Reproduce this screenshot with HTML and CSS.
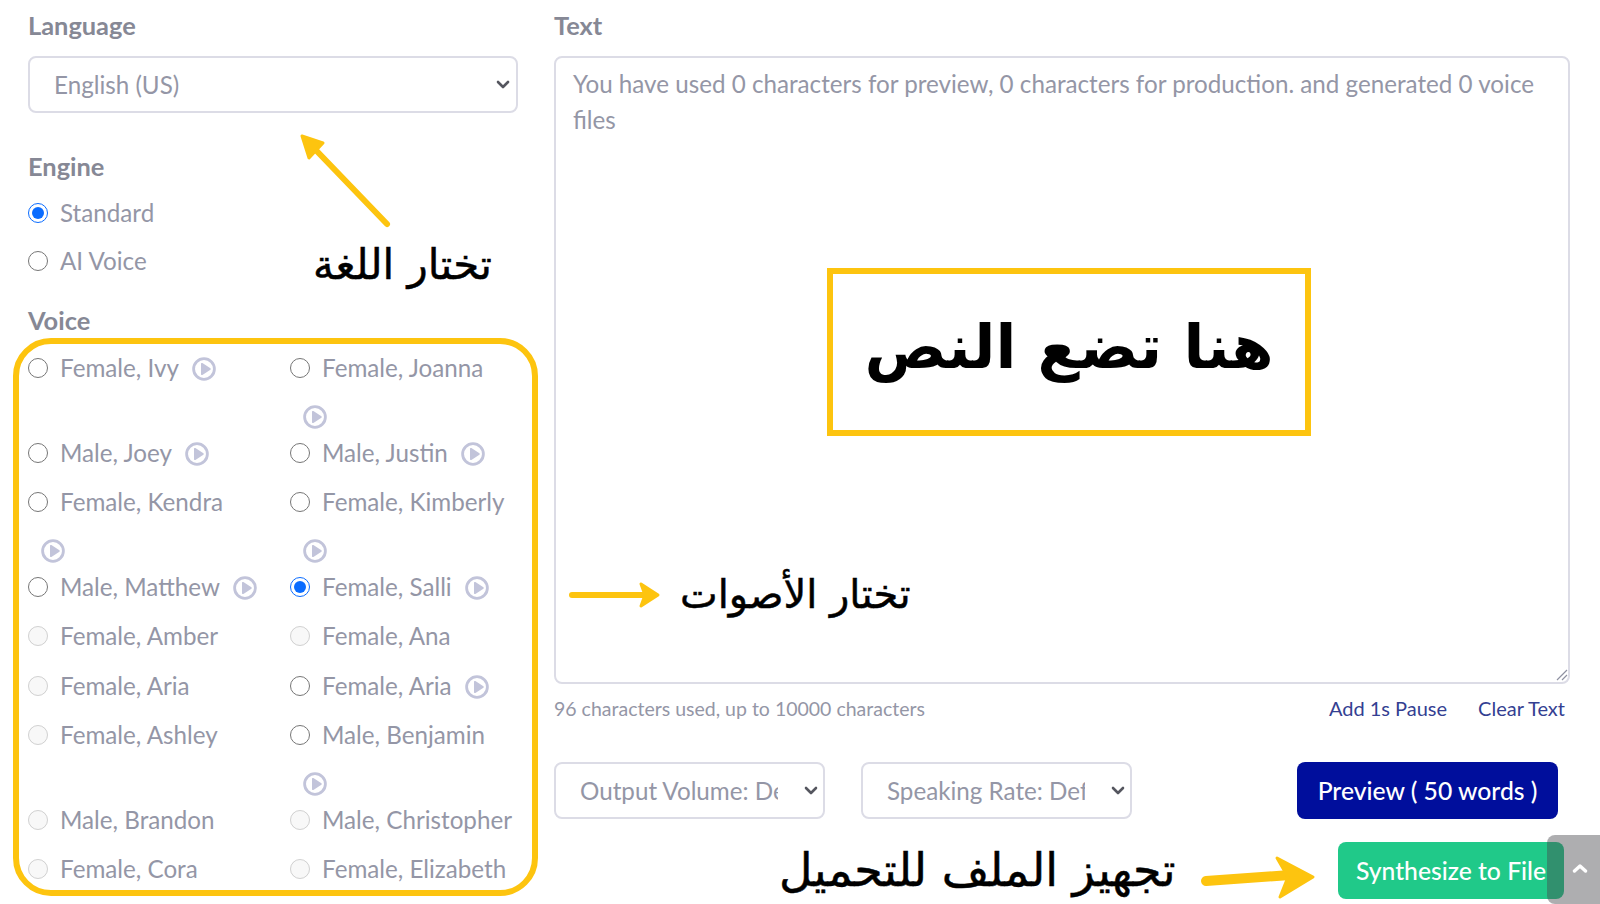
FILE: index.html
```html
<!DOCTYPE html>
<html lang="en">
<head>
    <meta charset="UTF-8">
    <meta name="viewport" content="width=device-width, initial-scale=1.0">
    <title>Text to Speech</title>
    <link rel="stylesheet" href="styles.css">
</head>
<body>
    <svg class="icon-defs" xmlns="http://www.w3.org/2000/svg">
        <symbol id="play" viewBox="0 0 24 24">
            <circle cx="12" cy="12" r="10.4" fill="none" stroke="currentColor" stroke-width="2.8"></circle>
            <path d="M9 6.8v10.4a.9.9 0 0 0 1.4.7l8-5.2a.9.9 0 0 0 0-1.4l-8-5.2a.9.9 0 0 0-1.4.7z" fill="currentColor"></path>
        </symbol>
    </svg>

    <div class="page">
        <div class="settings">
            <div class="form-group form-group-language">
                <label class="field-label" for="language">Language</label>
                <select id="language" class="select select-wide">
                    <option>English (US)</option>
                </select>
            </div>

            <div class="form-group form-group-engine">
                <div class="field-label">Engine</div>
                <label class="radio"><input type="radio" name="engine" checked>Standard</label>
                <label class="radio"><input type="radio" name="engine">AI Voice</label>
            </div>

            <div class="form-group">
                <div class="field-label">Voice</div>
                <div class="voices">
                    <label class="radio"><input type="radio" name="voice">Female, Ivy<svg class="play"><use href="#play"></use></svg></label>
                    <label class="radio"><input type="radio" name="voice">Female, Joanna<svg class="play play-below"><use href="#play"></use></svg></label>
                    <label class="radio"><input type="radio" name="voice">Male, Joey<svg class="play"><use href="#play"></use></svg></label>
                    <label class="radio"><input type="radio" name="voice">Male, Justin<svg class="play"><use href="#play"></use></svg></label>
                    <label class="radio"><input type="radio" name="voice">Female, Kendra<svg class="play play-below"><use href="#play"></use></svg></label>
                    <label class="radio"><input type="radio" name="voice">Female, Kimberly<svg class="play play-below"><use href="#play"></use></svg></label>
                    <label class="radio"><input type="radio" name="voice">Male, Matthew<svg class="play"><use href="#play"></use></svg></label>
                    <label class="radio"><input type="radio" name="voice" checked>Female, Salli<svg class="play"><use href="#play"></use></svg></label>
                    <label class="radio"><input type="radio" name="voice" disabled>Female, Amber</label>
                    <label class="radio"><input type="radio" name="voice" disabled>Female, Ana</label>
                    <label class="radio"><input type="radio" name="voice" disabled>Female, Aria</label>
                    <label class="radio"><input type="radio" name="voice">Female, Aria<svg class="play"><use href="#play"></use></svg></label>
                    <label class="radio"><input type="radio" name="voice" disabled>Female, Ashley</label>
                    <label class="radio"><input type="radio" name="voice">Male, Benjamin<svg class="play play-below"><use href="#play"></use></svg></label>
                    <label class="radio"><input type="radio" name="voice" disabled>Male, Brandon</label>
                    <label class="radio"><input type="radio" name="voice" disabled>Male, Christopher</label>
                    <label class="radio"><input type="radio" name="voice" disabled>Female, Cora</label>
                    <label class="radio"><input type="radio" name="voice" disabled>Female, Elizabeth</label>
                </div>
            </div>
        </div>

        <div class="editor">
            <label class="field-label" for="text">Text</label>
            <div class="text-wrap">
                <textarea id="text" class="text-input">You have used 0 characters for preview, 0 characters for production. and generated 0 voice files</textarea>
                <svg class="grip" xmlns="http://www.w3.org/2000/svg" viewBox="0 0 12 12" fill="none" stroke="#8f91a1" stroke-width="1.2">
                    <path d="M1 11L11 1M6 11l5-5"></path>
                </svg>
            </div>

            <div class="text-meta">
                <span>96 characters used, up to 10000 characters</span>
                <span class="text-actions">
                    <a href="#">Add 1s Pause</a>
                    <a href="#">Clear Text</a>
                </span>
            </div>

            <div class="controls">
                <select class="select select-small">
                    <option>Output Volume: Default</option>
                </select>
                <select class="select select-small">
                    <option>Speaking Rate: Default</option>
                </select>
                <button type="button" class="btn btn-preview">Preview ( 50 words )</button>
            </div>

            <div class="synth-row">
                <button type="button" class="btn btn-synth">Synthesize to File</button>
            </div>
        </div>

        <!-- Tutorial annotations drawn over the page -->
        <div class="note-voices"></div>
        <div class="note-text">
            <span lang="ar" dir="rtl">هنا تضع النص</span>
        </div>
        <span class="note note-lang" lang="ar" dir="rtl">تختار اللغة</span>
        <span class="note note-voice" lang="ar" dir="rtl">تختار الأصوات</span>
        <span class="note note-file" lang="ar" dir="rtl">تجهيز الملف للتحميل</span>

        <svg class="arrows" xmlns="http://www.w3.org/2000/svg" viewBox="0 0 1600 904">
            <path d="M387 224 L310 144" fill="none" stroke="#fdc40f" stroke-width="6" stroke-linecap="round"></path>
            <path d="M302 136 L323 143 L309 158 Z" fill="#fdc40f" stroke="#fdc40f" stroke-width="3" stroke-linejoin="round"></path>
            <path d="M572 595 L645 595" fill="none" stroke="#fdc40f" stroke-width="6" stroke-linecap="round"></path>
            <path d="M641 584 L658 595 L641 606 L645 595 Z" fill="#fdc40f" stroke="#fdc40f" stroke-width="3" stroke-linejoin="round"></path>
            <path d="M1206 881 L1290 875" fill="none" stroke="#fdc40f" stroke-width="10" stroke-linecap="round"></path>
            <path d="M1277 858 L1313 877 L1280 897 L1288 877 Z" fill="#fdc40f" stroke="#fdc40f" stroke-width="3" stroke-linejoin="round"></path>
        </svg>
    </div>

    <button type="button" class="scroll-top" aria-label="Back to top">
        <svg xmlns="http://www.w3.org/2000/svg" viewBox="0 0 16 10" fill="none" stroke="currentColor" stroke-width="3.4" stroke-linecap="round" stroke-linejoin="round">
            <path d="M2.5 8L8 3l5.5 5"></path>
        </svg>
    </button>
</body>
</html>
```

FILE: styles.css
```css
:root {
    --clr-text: #9496a6;
    --clr-label: #868895;
    --clr-border: #dcdce6;
    --clr-yellow: #fdc40f;
    --clr-play: #c2c4da;
    --clr-navy: #000e9c;
    --clr-green: #20c989;
    --clr-link: #343f92;
}

* {
    margin: 0;
    padding: 0;
    box-sizing: border-box;
}

html,
body {
    height: 904px;
    overflow: hidden;
    background: #fff;
}

body {
    font-family: 'Lato', 'Noto Sans', sans-serif;
    font-size: 24.2px;
    line-height: 35px;
    color: var(--clr-text);
}

.icon-defs {
    display: none;
}

.page {
    position: relative;
    display: flex;
    gap: 36px;
    height: 904px;
    padding: 8px 30px 0 28px;
}

.settings {
    flex: 0 0 490px;
    min-width: 0;
}

.editor {
    flex: 1;
    min-width: 0;
}

.field-label {
    display: block;
    font-size: 25.4px;
    font-weight: 700;
    color: var(--clr-label);
    margin-bottom: 12px;
}

.editor .field-label,
.form-group-language .field-label {
    margin-bottom: 13px;
}

.form-group-language {
    margin-bottom: 36px;
}

.form-group-engine {
    margin-bottom: 25px;
}

.form-group-engine .field-label {
    margin-bottom: 11px;
}

.form-group-engine .radio {
    margin-bottom: 13px;
}

.select {
    height: 57px;
    appearance: none;
    font-family: inherit;
    font-size: 24.2px;
    color: var(--clr-text);
    border: 2px solid var(--clr-border);
    border-radius: 8px;
    padding: 0 45px 0 24px;
    background: #fff url("data:image/svg+xml,%3Csvg xmlns='http://www.w3.org/2000/svg' viewBox='0 0 14 9' fill='none' stroke='%2355565f' stroke-width='2.6' stroke-linecap='round' stroke-linejoin='round'%3E%3Cpath d='M2 2l5 5 5-5'/%3E%3C/svg%3E") no-repeat right 5px center / 14px 9px;
}

.select-wide {
    width: 100%;
    background-position: right 6px center;
}

.select-small {
    width: 271px;
}

.radio {
    display: block;
    margin-bottom: 14.5px;
    cursor: pointer;
}

.radio input {
    width: 20px;
    height: 20px;
    margin: 0 12px 0 0;
    vertical-align: -1px;
    accent-color: #0a6cff;
}

.voices {
    display: grid;
    grid-template-columns: 229px 229px;
    column-gap: 33px;
    align-items: start;
}

.play {
    width: 24px;
    height: 24px;
    margin-left: 13px;
    vertical-align: -4px;
    color: var(--clr-play);
}

.play-below {
    display: block;
    margin-top: 20px;
    margin-bottom: -9px;
}

.text-wrap {
    position: relative;
}

.text-input {
    display: block;
    width: 100%;
    height: 628px;
    padding: 8px 17px;
    font-family: inherit;
    font-size: 24.2px;
    line-height: 36px;
    color: var(--clr-text);
    border: 2px solid var(--clr-border);
    border-radius: 8px;
    outline: none;
    resize: none;
}

.grip {
    position: absolute;
    right: 2px;
    bottom: 3px;
    width: 12px;
    height: 12px;
}

.text-meta {
    display: flex;
    justify-content: space-between;
    padding-right: 5px;
    margin-top: 7px;
    font-size: 19.5px;
}

.text-actions a {
    font-size: 20px;
    color: var(--clr-link);
    text-decoration: none;
    margin-left: 26px;
}

.controls {
    display: flex;
    gap: 36px;
    margin-top: 36px;
}

.btn {
    border: none;
    border-radius: 8px;
    font-family: inherit;
    font-size: 24.7px;
    font-weight: 500;
    color: #fff;
    cursor: pointer;
}

.btn-preview {
    width: 261px;
    height: 57px;
    margin-left: auto;
    margin-right: 12px;
    background: var(--clr-navy);
}

.synth-row {
    display: flex;
    justify-content: flex-end;
    margin-top: 23px;
    padding-right: 6px;
}

.btn-synth {
    width: 226px;
    height: 57px;
    background: var(--clr-green);
}

.scroll-top {
    position: fixed;
    right: 0;
    bottom: 0;
    width: 53px;
    height: 69px;
    padding: 0 0 4px 13px;
    display: flex;
    align-items: center;
    justify-content: center;
    border: none;
    border-radius: 8px 0 0 8px;
    background: rgba(70, 70, 75, 0.44);
    color: #fff;
}

.scroll-top svg {
    width: 16px;
    height: 10px;
}

/* Annotations */
.note-voices {
    position: absolute;
    left: 13px;
    top: 338px;
    width: 525px;
    height: 558px;
    border: 6px solid var(--clr-yellow);
    border-radius: 38px;
    pointer-events: none;
}

.note-text {
    position: absolute;
    left: 827px;
    top: 268px;
    width: 484px;
    height: 168px;
    padding-bottom: 10px;
    display: flex;
    align-items: center;
    justify-content: center;
    border: 6px solid var(--clr-yellow);
    background: #fff;
    font-family: 'DejaVu Sans', sans-serif;
    font-size: 61px;
    font-weight: 700;
    line-height: 1.2;
    color: #000;
}

.note {
    position: absolute;
    font-family: 'DejaVu Sans', sans-serif;
    color: #000;
    white-space: nowrap;
    -webkit-text-stroke: 0.5px #000;
}

.note-lang {
    left: 313px;
    top: 240px;
    font-size: 42px;
    line-height: 50px;
}

.note-voice {
    left: 680px;
    top: 569px;
    font-size: 40px;
    line-height: 50px;
}

.note-file {
    left: 779px;
    top: 843px;
    font-size: 46px;
    line-height: 54px;
}

.arrows {
    position: absolute;
    left: 0;
    top: 0;
    width: 1600px;
    height: 904px;
    pointer-events: none;
}
```
